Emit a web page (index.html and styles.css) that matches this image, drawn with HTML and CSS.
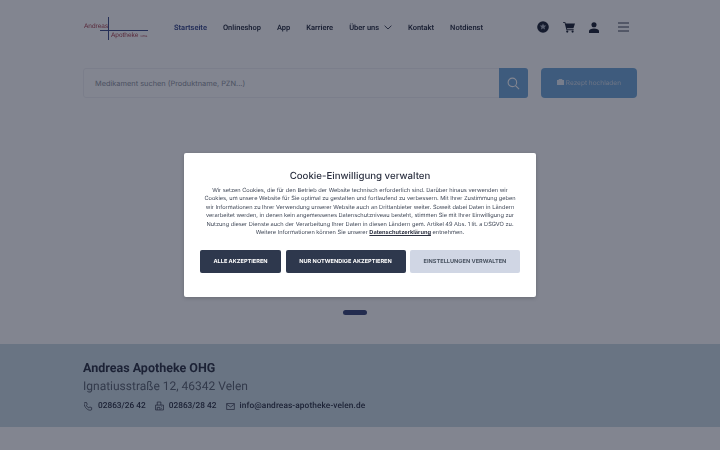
FILE: index.html
```html
<!DOCTYPE html>
<html lang="de">
<head>
    <meta charset="UTF-8">
    <meta name="viewport" content="width=device-width, initial-scale=1.0">
    <title>Andreas Apotheke</title>
    <link rel="stylesheet" href="styles.css">
</head>
<body>
    <div class="page">
        <header class="topbar">
            <div class="logo">
                <span class="logo_top">Andreas</span>
                <span class="logo_bottom">Apotheke<small>OHG</small></span>
            </div>
            <nav class="menu">
                <a class="active" href="#">Startseite</a>
                <a href="#">Onlineshop</a>
                <a href="#">App</a>
                <a href="#">Karriere</a>
                <a class="has_sub" href="#">Über uns
                    <svg width="8" height="5" viewBox="0 0 8 5" fill="none" stroke="#2f3446" stroke-width="0.9"><path d="M.6.7 4 4 7.4.7"/></svg>
                </a>
                <a href="#">Kontakt</a>
                <a href="#">Notdienst</a>
            </nav>
            <div class="tools">
                <svg width="12" height="12" viewBox="0 0 13 13"><circle cx="6.5" cy="6.5" r="6.3" fill="#1d2333"/><path d="M6.500 2.600 7.500 4.800 10 5 8.100 6.700 8.700 9.300 6.500 7.900 4.300 9.300 4.900 6.700 3 5 5.500 4.800z" fill="#aab0bd"/></svg>
                <svg width="12" height="12" viewBox="0 0 13 13" fill="#1d2333"><path d="M0 1h2.400l.5 1.600H13l-1.700 5.200H4.200l.4 1.200h7v1H3.800L1.700 2H0z"/><circle cx="4.600" cy="11.400" r="1.200"/><circle cx="10.400" cy="11.400" r="1.200"/></svg>
                <svg width="10" height="11" viewBox="0 0 11 12" fill="#1d2333"><circle cx="5.500" cy="3" r="2.800"/><path d="M0 12V9.800C0 8 2.500 7 5.500 7s5.500 1 5.500 2.800V12z"/></svg>
                <svg class="burger" width="11" height="10" viewBox="0 0 11 10" stroke="#3a4052" stroke-width="1"><path d="M0 1h11M0 5h11M0 9h11"/></svg>
            </div>
        </header>

        <div class="search_row">
            <div class="search_box">
                <span class="search_text">Medikament suchen (Produktname, PZN...)</span>
                <span class="search_btn">
                    <svg width="13" height="13" viewBox="0 0 14 14" fill="none" stroke="#fff" stroke-width="1.200"><circle cx="5.800" cy="5.800" r="4.600"/><path d="M9.200 9.200 13 13"/></svg>
                </span>
            </div>
            <button class="upload_btn">
                <svg width="7" height="6" viewBox="0 0 7 6" fill="#e6eef6"><path d="M0 1h1.500l.5-1h3l.5 1H7v5H0z"/></svg>
                Rezept hochladen
            </button>
        </div>

        <div class="slider">
            <span class="slide_dot"></span>
        </div>

        <section class="contact">
            <div class="contact_inner">
                <h2>Andreas Apotheke OHG</h2>
                <p class="address">Ignatiusstraße 12, 46342 Velen</p>
                <div class="contact_links">
                    <span>
                        <svg width="9" height="9" viewBox="0 0 10 10" fill="none" stroke="#2f3446" stroke-width="0.8"><path d="M1 .6h1.800l.8 2.200-1.100.9c.6 1.300 1.600 2.300 2.900 2.900l.9-1.100 2.200.8v1.800c0 .6-.5 1.100-1.100 1C4 9.500.5 6 0 1.700 0 1.100.4.600 1 .6z"/></svg>
                        02863/26 42
                    </span>
                    <span>
                        <svg width="9" height="10" viewBox="0 0 10 10" fill="none" stroke="#2f3446" stroke-width="0.8"><path d="M2.500 4V.6h4V4M.6 4h8.800v5.400H.6zM2.500 9.400V6.500h3v2.900M7.300 5.500v.8M7.300 7.500v.8"/></svg>
                        02863/28 42
                    </span>
                    <span class="mail">
                        <svg width="9" height="7" viewBox="0 0 10 8" fill="none" stroke="#2f3446" stroke-width="0.8"><path d="M.6.6h8.800v6.800H.6zM.6 1.400 5 4.600l4.400-3.200"/></svg>
                        info@andreas-apotheke-velen.de
                    </span>
                </div>
            </div>
        </section>
        <div class="page_end"></div>
    </div>

    <div class="overlay">
        <div class="cookie_box">
            <h3>Cookie-Einwilligung verwalten</h3>
            <p>Wir setzen Cookies, die für den Betrieb der Website technisch erforderlich sind. Darüber hinaus verwenden wir Cookies, um unsere Website für Sie optimal zu gestalten und fortlaufend zu verbessern. Mit Ihrer Zustimmung geben wir Informationen zu Ihrer Verwendung unserer Website auch an Drittanbieter weiter. Soweit dabei Daten in Ländern verarbeitet werden, in denen kein angemessenes Datenschutzniveau besteht, stimmen Sie mit Ihrer Einwilligung zur Nutzung dieser Dienste auch der Verarbeitung Ihrer Daten in diesen Ländern gem. Artikel 49 Abs. 1 lit. a DSGVO zu. Weitere Informationen können Sie unserer <a href="#">Datenschutzerklärung</a> entnehmen.</p>
            <div class="cookie_btns">
                <button class="dark wide1">ALLE AKZEPTIEREN</button>
                <button class="dark wide2">NUR NOTWENDIGE AKZEPTIEREN</button>
                <button class="light">EINSTELLUNGEN VERWALTEN</button>
            </div>
        </div>
    </div>
</body>
</html>
```

FILE: styles.css
```css
* {
    box-sizing: border-box;
}

html, body {
    height: 100%;
}

body {
    margin: 0;
    overflow: hidden;
    background: #fff;
    color: #2a3042;
    font-family: Roboto, sans-serif;
    text-rendering: geometricPrecision;
}

button {
    text-rendering: inherit;
}

.page {
    height: 450px;
    display: flex;
    flex-direction: column;
    filter: blur(0.65px);
}

.topbar {
    width: 554px;
    height: 54px;
    margin: 0 auto;
    display: flex;
    align-items: center;
}

.logo {
    width: 66px;
    height: 26px;
    margin-right: 25px;
    position: relative;
    font-family: "Liberation Sans", sans-serif;
    font-size: 6.500px;
    background:
        linear-gradient(#3c4a86, #3c4a86) 17px 16px / 48px 1px no-repeat,
        linear-gradient(#3c4a86, #3c4a86) 25px 3px / 1px 23px no-repeat;
}

.logo_top {
    position: absolute;
    left: 1px;
    top: 9px;
    color: #a8404f;
}

.logo_bottom {
    position: absolute;
    left: 28px;
    top: 18px;
    color: #a8404f;
}

.logo_bottom small {
    font-size: 3px;
    margin-left: 2px;
}

.menu {
    display: flex;
    align-items: center;
    gap: 16px;
    flex: 1;
}

.menu a {
    color: #2a3042;
    text-decoration: none;
    font-size: 7.500px;
    font-weight: 600;
}

.menu a.active {
    color: #3a4a8c;
}

.has_sub svg {
    margin-left: 3px;
}

.tools {
    display: flex;
    align-items: center;
    gap: 14px;
    padding-right: 8px;
}

.burger {
    margin-left: 5px;
}

.search_row {
    width: 554px;
    margin: 14px auto 0;
    display: flex;
    gap: 13px;
}

.search_box {
    width: 445px;
    height: 30px;
    display: flex;
    align-items: center;
    justify-content: space-between;
    border: 1px solid #f0f1f4;
    border-radius: 3px;
    background: #fff;
}

.search_text {
    padding-left: 11px;
    font-family: Inter, sans-serif;
    font-size: 7.400px;
    color: #8c919c;
}

.search_btn {
    width: 29px;
    height: 30px;
    margin-right: -1px;
    display: flex;
    align-items: center;
    justify-content: center;
    background: #72a8d8;
    border-radius: 0 3px 3px 0;
}

.upload_btn {
    width: 96px;
    height: 30px;
    border: 0;
    border-radius: 4px;
    background: #72a8d8;
    color: #d0dae6;
    font-family: Inter, sans-serif;
    font-size: 6.500px;
}

.slider {
    flex: 1;
    display: flex;
    justify-content: center;
    align-items: flex-end;
    padding: 0 10px 29px 0;
}

.slide_dot {
    width: 24px;
    height: 5px;
    border-radius: 3px;
    background: #3a4678;
}

.contact {
    height: 83px;
    background: #cbdbe3;
}

.contact_inner {
    width: 554px;
    margin: 0 auto;
    padding-top: 16px;
}

.contact h2 {
    margin: 0;
    font-size: 12.500px;
    font-weight: 700;
    line-height: 17px;
}

.address {
    margin: 1px 0 0;
    font-size: 12px;
    line-height: 17px;
    color: #59626f;
}

.contact_links {
    margin-top: 5px;
    padding-left: 1px;
    display: flex;
    gap: 9px;
    font-size: 8.300px;
    font-weight: 500;
    line-height: 12px;
}

.contact_links span {
    display: flex;
    align-items: center;
    gap: 5px;
}

.contact_links .mail {
    letter-spacing: 0.1px;
}

.page_end {
    height: 23px;
}

.overlay {
    position: fixed;
    inset: 0;
    display: flex;
    align-items: center;
    justify-content: center;
    background: rgba(15, 22, 42, 0.52);
}

.cookie_box {
    width: 352px;
    height: 144px;
    padding: 17px 16px 0;
    background: #fff;
    border-radius: 2px;
    box-shadow: 0 1px 4px rgba(0, 0, 0, 0.2);
    text-align: center;
    filter: blur(0.25px);
}

.cookie_box h3 {
    margin: 0;
    font-family: Inter, sans-serif;
    font-size: 9.700px;
    font-weight: 500;
    line-height: 13px;
    color: #2b3040;
}

.cookie_box p {
    margin: 4px 0 0;
    font-family: Inter, sans-serif;
    font-size: 5.650px;
    line-height: 8.400px;
    color: #3f4756;
}

.cookie_box p a {
    color: #2b3040;
    font-weight: 700;
}

.cookie_btns {
    margin-top: 13px;
    display: flex;
    justify-content: space-between;
}

.cookie_btns button {
    height: 23px;
    border: 0;
    border-radius: 2px;
    font-family: Inter, sans-serif;
    font-size: 5.600px;
    font-weight: 700;
}

.dark {
    background: #2e384d;
    color: #fff;
}

.wide1 {
    width: 81px;
}

.wide2 {
    width: 120px;
}

.light {
    width: 110px;
    background: #d0d6e4;
    color: #4b5563;
}
```
